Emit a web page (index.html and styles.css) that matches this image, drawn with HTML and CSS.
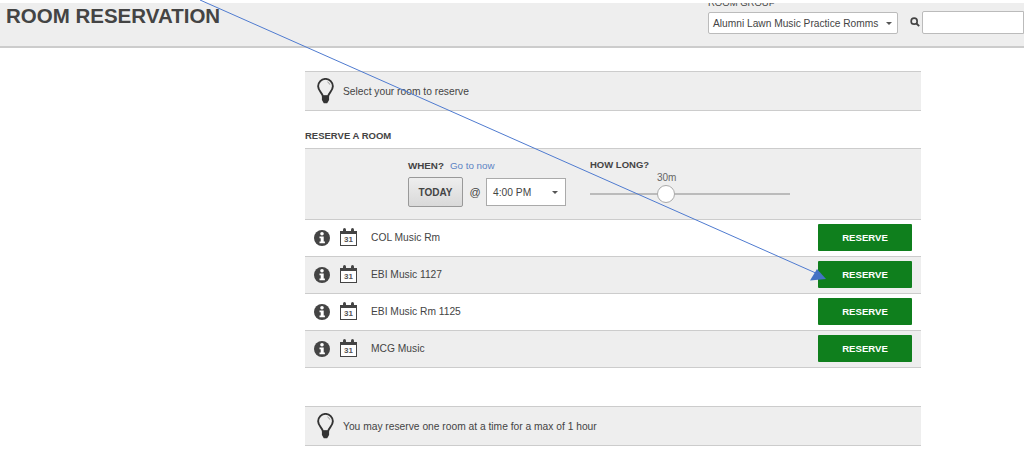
FILE: index.html
```html
<!DOCTYPE html>
<html lang="en">
<head>
<meta charset="utf-8">
<title>Room Reservation</title>
<link rel="stylesheet" href="styles.css">
</head>
<body>
<svg width="0" height="0" class="defs">
  <defs>
    <symbol id="bulb" viewBox="0 0 18 27">
      <path d="M6.200 19C5.800 15.500 1.200 13.500 1.200 8.500A7.800 7.800 0 0 1 16.800 8.500C16.800 13.500 12.200 15.500 11.800 19Z" fill="none" stroke="#333" stroke-width="2"/>
      <path d="M11 3.800A5 5 0 0 1 13.600 6.800" fill="none" stroke="#999" stroke-width="1"/>
      <path d="M5.200 18.500H12.800V23L10.800 26.500H7.200L5.200 23Z" fill="#333"/>
    </symbol>
    <symbol id="info" viewBox="0 0 16 16">
      <circle cx="8" cy="8" r="8" fill="#444"/>
      <circle cx="8" cy="3.700" r="1.800" fill="#fff"/>
      <path d="M5.500 6.600H9.700V11.500H10.900V13.200H5.500V11.500H6.700V8.300H5.500Z" fill="#fff"/>
    </symbol>
  </defs>
</svg>
<header class="topbar">
  <h1 class="title">ROOM RESERVATION</h1>
  <div class="tools">
    <div class="group">
      <div class="group-label">ROOM GROUP</div>
      <div class="group-select"><span>Alumni Lawn Music Practice Romms</span><i class="caret"></i></div>
    </div>
    <svg class="search-icon" viewBox="0 0 12 12" width="10" height="10"><circle cx="5" cy="5" r="3.600" fill="none" stroke="#444" stroke-width="2"/><path d="M7.800 7.800L11 11" stroke="#444" stroke-width="2.200"/></svg>
    <div class="search-box"></div>
  </div>
</header>
<main class="content">
  <div class="notice">
    <svg class="bulb"><use href="#bulb"/></svg>
    <span>Select your room to reserve</span>
  </div>
  <h2 class="section-title">RESERVE A ROOM</h2>
  <section class="filters">
    <div class="when">
      <div class="label-row"><b>WHEN?</b><a class="now">Go to now</a></div>
      <div class="when-row">
        <div class="today">TODAY</div>
        <span class="at">@</span>
        <div class="time"><span>4:00 PM</span><i class="caret"></i></div>
      </div>
    </div>
    <div class="how-long">
      <b>HOW LONG?</b>
      <div class="slider-value">30m</div>
      <div class="slider"><div class="knob"></div></div>
    </div>
  </section>
  <div class="row">
    <svg class="info"><use href="#info"/></svg>
    <div class="cal"><span>31</span></div>
    <span class="room">COL Music Rm</span>
    <div class="reserve">RESERVE</div>
  </div>
  <div class="row alt">
    <svg class="info"><use href="#info"/></svg>
    <div class="cal"><span>31</span></div>
    <span class="room">EBI Music 1127</span>
    <div class="reserve">RESERVE</div>
  </div>
  <div class="row">
    <svg class="info"><use href="#info"/></svg>
    <div class="cal"><span>31</span></div>
    <span class="room">EBI Music Rm 1125</span>
    <div class="reserve">RESERVE</div>
  </div>
  <div class="row alt">
    <svg class="info"><use href="#info"/></svg>
    <div class="cal"><span>31</span></div>
    <span class="room">MCG Music</span>
    <div class="reserve">RESERVE</div>
  </div>
  <div class="notice lower">
    <svg class="bulb"><use href="#bulb"/></svg>
    <span>You may reserve one room at a time for a max of 1 hour</span>
  </div>
</main>
<svg class="arrow" width="1024" height="462" viewBox="0 0 1024 462">
  <path d="M200 0L818 274" stroke="#4f7bd0" stroke-width="1" fill="none"/>
  <path d="M817 269L810 280.500L826 279Z" fill="#4472c4"/>
</svg>
</body>
</html>
```
FILE: styles.css
```css
* { box-sizing: border-box; }
html, body { margin: 0; padding: 0; }
body {
  height: 462px;
  overflow: hidden;
  background: #fff;
  padding-top: 3px;
  font-family: "Liberation Sans", Arial, sans-serif;
  color: #444;
  font-size: 10px;
}
.defs { position: absolute; }
.topbar {
  height: 45px;
  background: #eee;
  border-bottom: 2px solid #ccc;
  display: flex;
  justify-content: space-between;
  overflow: hidden;
}
.title {
  margin: 1px 0 0 6px;
  font-size: 20.500px;
  line-height: 23px;
  font-weight: bold;
  color: #444;
}
.tools {
  display: flex;
  align-items: flex-start;
}
.group-label {
  font-size: 9.500px;
  line-height: 12px;
  height: 9px;
  margin-top: -6px;
  white-space: nowrap;
  color: #444;
}
.group-select {
  width: 190px;
  height: 22px;
  margin-top: 6px;
  background: #fff;
  border: 1px solid #bbb;
  border-radius: 2px;
  padding: 0 5px 0 4px;
  display: flex;
  align-items: center;
  justify-content: space-between;
  font-size: 10.200px;
  white-space: nowrap;
  color: #444;
}
.caret {
  width: 0;
  height: 0;
  border-left: 3.500px solid transparent;
  border-right: 3.500px solid transparent;
  border-top: 3.500px solid #555;
}
.search-icon { margin: 14px 2px 0 12px; }
.search-box {
  width: 102px;
  height: 23px;
  margin-top: 8px;
  background: #fff;
  border: 1px solid #bbb;
  border-radius: 2px 0 0 2px;
}
.content {
  width: 616px;
  margin: 23px 0 0 305px;
}
.notice {
  height: 40px;
  background: #eee;
  border-top: 1px solid #ccc;
  border-bottom: 1px solid #ccc;
  display: flex;
  align-items: center;
  padding-left: 12px;
  font-size: 10.250px;
  gap: 9px;
}
.notice.lower { margin-top: 38px; }
.bulb { width: 17px; height: 26px; }
.section-title {
  margin: 19px 0 7px;
  font-size: 9.500px;
  line-height: 11px;
  font-weight: bold;
  color: #444;
}
.filters {
  height: 72px;
  background: #eee;
  border-top: 1px solid #ccc;
  border-bottom: 1px solid #ccc;
  display: flex;
  padding: 11px 0 0 103px;
}
.label-row {
  font-size: 9.800px;
  line-height: 12px;
  display: flex;
  gap: 6px;
}
.now { color: #5b83c4; }
.when-row {
  display: flex;
  align-items: center;
  margin-top: 5px;
}
.today {
  width: 55px;
  height: 30px;
  background: linear-gradient(#eee, #d9d9d9);
  border: 1px solid #999;
  border-radius: 2px;
  display: flex;
  align-items: center;
  justify-content: center;
  font-size: 10px;
  font-weight: bold;
  color: #444;
}
.at { width: 23px; padding-left: 1px; text-align: center; font-size: 11px; }
.time {
  width: 80px;
  height: 28px;
  background: #fff;
  border: 1px solid #aaa;
  display: flex;
  align-items: center;
  justify-content: space-between;
  padding: 0 7px 0 6px;
  font-size: 10.250px;
}
.how-long {
  width: 200px;
  margin: -1px 0 0 24px;
  font-size: 9.500px;
  line-height: 12px;
}
.slider-value {
  margin-top: 1px;
  padding-left: 67px;
  font-size: 10px;
  color: #666;
}
.slider {
  height: 2px;
  margin-top: 9px;
  background: #bbb;
  position: relative;
}
.knob {
  position: absolute;
  left: 67px;
  top: -8px;
  width: 18px;
  height: 18px;
  background: #fff;
  border: 1px solid #aaa;
  border-radius: 50%;
}
.row {
  height: 37px;
  display: flex;
  align-items: center;
  border-bottom: 1px solid #ccc;
  padding: 0 9px 1px 9px;
}
.row.alt { background: #eee; }
.info { width: 16px; height: 16px; }
.cal {
  width: 17px;
  height: 15px;
  margin: 2px 0 0 10px;
  border: 1px solid #444;
  border-top-width: 3px;
  background: #fff;
  position: relative;
  font-size: 8px;
  font-weight: bold;
  line-height: 11px;
  text-align: center;
  color: #555;
}
.cal::before {
  content: "";
  position: absolute;
  left: 2px;
  top: -6px;
  width: 3px;
  height: 6px;
  background: #444;
  border-radius: 2px 2px 0 0;
}
.cal::after {
  content: "";
  position: absolute;
  right: 2px;
  top: -6px;
  width: 3px;
  height: 6px;
  background: #444;
  border-radius: 2px 2px 0 0;
}
.room { margin-left: 14px; font-size: 10.250px; flex: 1; }
.reserve {
  width: 94px;
  height: 27px;
  background: #0f7f1d;
  border-radius: 1px;
  color: #fff;
  font-size: 9.600px;
  font-weight: bold;
  display: flex;
  align-items: center;
  justify-content: center;
}
.arrow {
  position: absolute;
  left: 0;
  top: 0;
  pointer-events: none;
}
```
